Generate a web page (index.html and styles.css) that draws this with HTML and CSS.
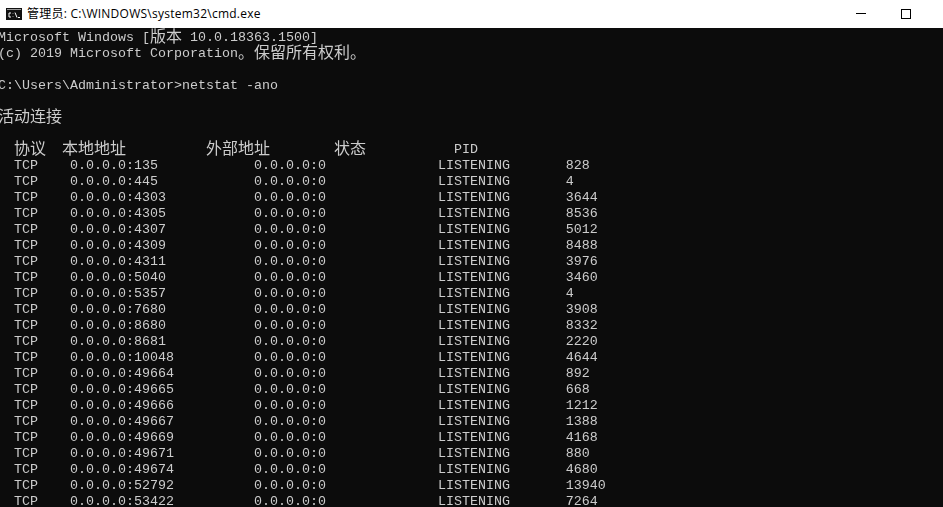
FILE: index.html
```html
<!DOCTYPE html>
<html lang="zh-CN">
<head>
<meta charset="utf-8">
<title>cmd.exe</title>
<link rel="stylesheet" href="styles.css">
</head>
<body>
<div class="window">
<header class="titlebar">
<svg class="app-icon" width="16" height="12" viewBox="0 0 16 12" aria-hidden="true">
<rect width="16" height="12" fill="#111"/>
<rect x="1" y="1" width="14" height="1" fill="#9a9a9a"/>
<path d="M5 5H3V9H5M7 5.5V6M7 8V8.5M9 4.5L11 9.5M12 9.5H14" fill="none" stroke="#fff" stroke-width="1"/>
</svg>
<span class="title">管理员: C:\WINDOWS\system32\cmd.exe</span>
<div class="controls">
<svg class="control min" width="10" height="10" viewBox="0 0 10 10" aria-hidden="true"><rect y="4" width="10" height="1" fill="#000"/></svg>
<svg class="control max" width="10" height="10" viewBox="0 0 10 10" aria-hidden="true"><rect x=".5" y=".5" width="9" height="9" fill="none" stroke="#000"/></svg>
</div>
</header>
<main class="console">
<div class="line">Microsoft Windows [<span class="cjk">版本</span> 10.0.18363.1500]</div>
<div class="line">(c) 2019 Microsoft Corporation<span class="cjk">。保留所有权利。</span></div>
<div class="line"></div>
<div class="line">C:\Users\Administrator&gt;netstat -ano</div>
<div class="line"></div>
<div class="line"><span class="cjk">活动连接</span></div>
<div class="line"></div>
<div class="line">  <span class="cjk">协议</span>  <span class="cjk">本地地址</span>          <span class="cjk">外部地址</span>        <span class="cjk">状态</span>           PID</div>
<div class="line">  TCP    0.0.0.0:135            0.0.0.0:0              LISTENING       828</div>
<div class="line">  TCP    0.0.0.0:445            0.0.0.0:0              LISTENING       4</div>
<div class="line">  TCP    0.0.0.0:4303           0.0.0.0:0              LISTENING       3644</div>
<div class="line">  TCP    0.0.0.0:4305           0.0.0.0:0              LISTENING       8536</div>
<div class="line">  TCP    0.0.0.0:4307           0.0.0.0:0              LISTENING       5012</div>
<div class="line">  TCP    0.0.0.0:4309           0.0.0.0:0              LISTENING       8488</div>
<div class="line">  TCP    0.0.0.0:4311           0.0.0.0:0              LISTENING       3976</div>
<div class="line">  TCP    0.0.0.0:5040           0.0.0.0:0              LISTENING       3460</div>
<div class="line">  TCP    0.0.0.0:5357           0.0.0.0:0              LISTENING       4</div>
<div class="line">  TCP    0.0.0.0:7680           0.0.0.0:0              LISTENING       3908</div>
<div class="line">  TCP    0.0.0.0:8680           0.0.0.0:0              LISTENING       8332</div>
<div class="line">  TCP    0.0.0.0:8681           0.0.0.0:0              LISTENING       2220</div>
<div class="line">  TCP    0.0.0.0:10048          0.0.0.0:0              LISTENING       4644</div>
<div class="line">  TCP    0.0.0.0:49664          0.0.0.0:0              LISTENING       892</div>
<div class="line">  TCP    0.0.0.0:49665          0.0.0.0:0              LISTENING       668</div>
<div class="line">  TCP    0.0.0.0:49666          0.0.0.0:0              LISTENING       1212</div>
<div class="line">  TCP    0.0.0.0:49667          0.0.0.0:0              LISTENING       1388</div>
<div class="line">  TCP    0.0.0.0:49669          0.0.0.0:0              LISTENING       4168</div>
<div class="line">  TCP    0.0.0.0:49671          0.0.0.0:0              LISTENING       880</div>
<div class="line">  TCP    0.0.0.0:49674          0.0.0.0:0              LISTENING       4680</div>
<div class="line">  TCP    0.0.0.0:52792          0.0.0.0:0              LISTENING       13940</div>
<div class="line">  TCP    0.0.0.0:53422          0.0.0.0:0              LISTENING       7264</div>
</main>
</div>
</body>
</html>
```
FILE: styles.css
```css
html, body {
  margin: 0;
  height: 100%;
  overflow: hidden;
  background: #0c0c0c;
}
.window {
  display: flex;
  flex-direction: column;
  height: 507px;
  overflow: hidden;
}
.titlebar {
  flex: 0 0 28px;
  display: flex;
  align-items: center;
  background: #fff;
  padding-left: 6px;
}
.app-icon {
  flex: none;
  margin-right: 5px;
}
.title {
  font: 12px/28px "Open Sans", "Noto Sans CJK SC", sans-serif;
  letter-spacing: 0.25px;
  color: #000;
  white-space: pre;
}
.controls {
  margin-left: auto;
  display: flex;
  gap: 35px;
  padding-right: 32px;
}
.console {
  flex: 1;
  margin-left: -2px;
  color: #cccccc;
  font-family: "Liberation Mono", "Noto Sans CJK SC", monospace;
  font-size: 13.333px;
  will-change: transform;
}
.line {
  height: 16px;
  line-height: 20px;
  white-space: pre;
}
.cjk {
  font-family: "Noto Sans CJK SC", sans-serif;
  font-size: 16px;
  line-height: 0;
  vertical-align: -1px;
}
```
